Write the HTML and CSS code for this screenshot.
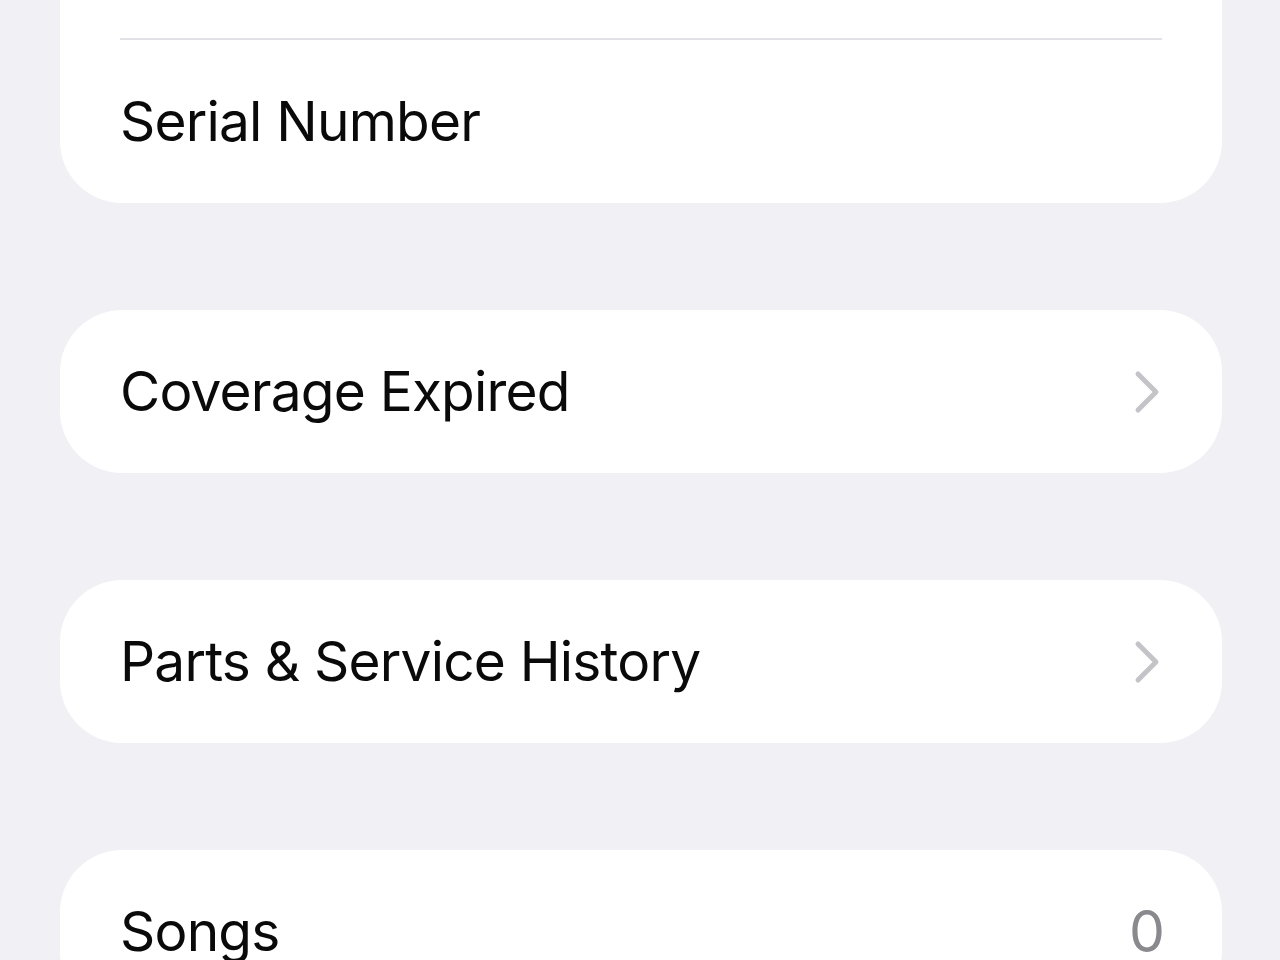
FILE: index.html
```html
<!DOCTYPE html>
<html lang="en">
<head>
<meta charset="utf-8">
<title>About</title>
<link rel="stylesheet" href="styles.css">
</head>
<body>
<main class="list">
  <section class="card card-cut">
    <div class="row-tail"></div>
    <div class="divider"></div>
    <div class="row"><span class="label">Serial Number</span></div>
  </section>
  <section class="card">
    <div class="row"><span class="label">Coverage Expired</span>
      <svg class="chev" width="28" height="44" viewBox="0 0 28 44"><path d="M4 4 L22 22 L4 40" fill="none" stroke="#c4c4c8" stroke-width="5" stroke-linecap="round" stroke-linejoin="round"/></svg>
    </div>
  </section>
  <section class="card">
    <div class="row"><span class="label">Parts &amp; Service History</span>
      <svg class="chev" width="28" height="44" viewBox="0 0 28 44"><path d="M4 4 L22 22 L4 40" fill="none" stroke="#c4c4c8" stroke-width="5" stroke-linecap="round" stroke-linejoin="round"/></svg>
    </div>
  </section>
  <section class="card">
    <div class="row row-value"><span class="label">Songs</span><span class="value">0</span></div>
  </section>
</main>
</body>
</html>
```
FILE: styles.css
```css
html, body {
  margin: 0;
  padding: 0;
  height: 100%;
  overflow: hidden;
  background: #f0f0f5;
}
body {
  font-family: Inter, "Noto Sans", sans-serif;
  color: #0a0a0a;
}
.list {
  display: flex;
  flex-direction: column;
  gap: 107px;
  padding: 0 58px 0 60px;
}
.card {
  background: #ffffff;
  border-radius: 62px;
  overflow: hidden;
}
.card-cut {
  border-top-left-radius: 0;
  border-top-right-radius: 0;
}
.row-tail {
  height: 38px;
}
.divider {
  height: 2px;
  background: #e2e2e6;
  margin: 0 60px;
}
.row {
  height: 163px;
  padding: 0 62px 0 60px;
  display: flex;
  align-items: center;
  justify-content: space-between;
}
.row-value {
  padding-right: 57px;
}
.label {
  font-size: 55px;
  letter-spacing: -0.8px;
  line-height: 1;
}
.value {
  font-size: 57px;
  color: #8a8a8e;
  line-height: 1;
}
.chev {
  display: block;
  margin-right: -2px;
}
```
